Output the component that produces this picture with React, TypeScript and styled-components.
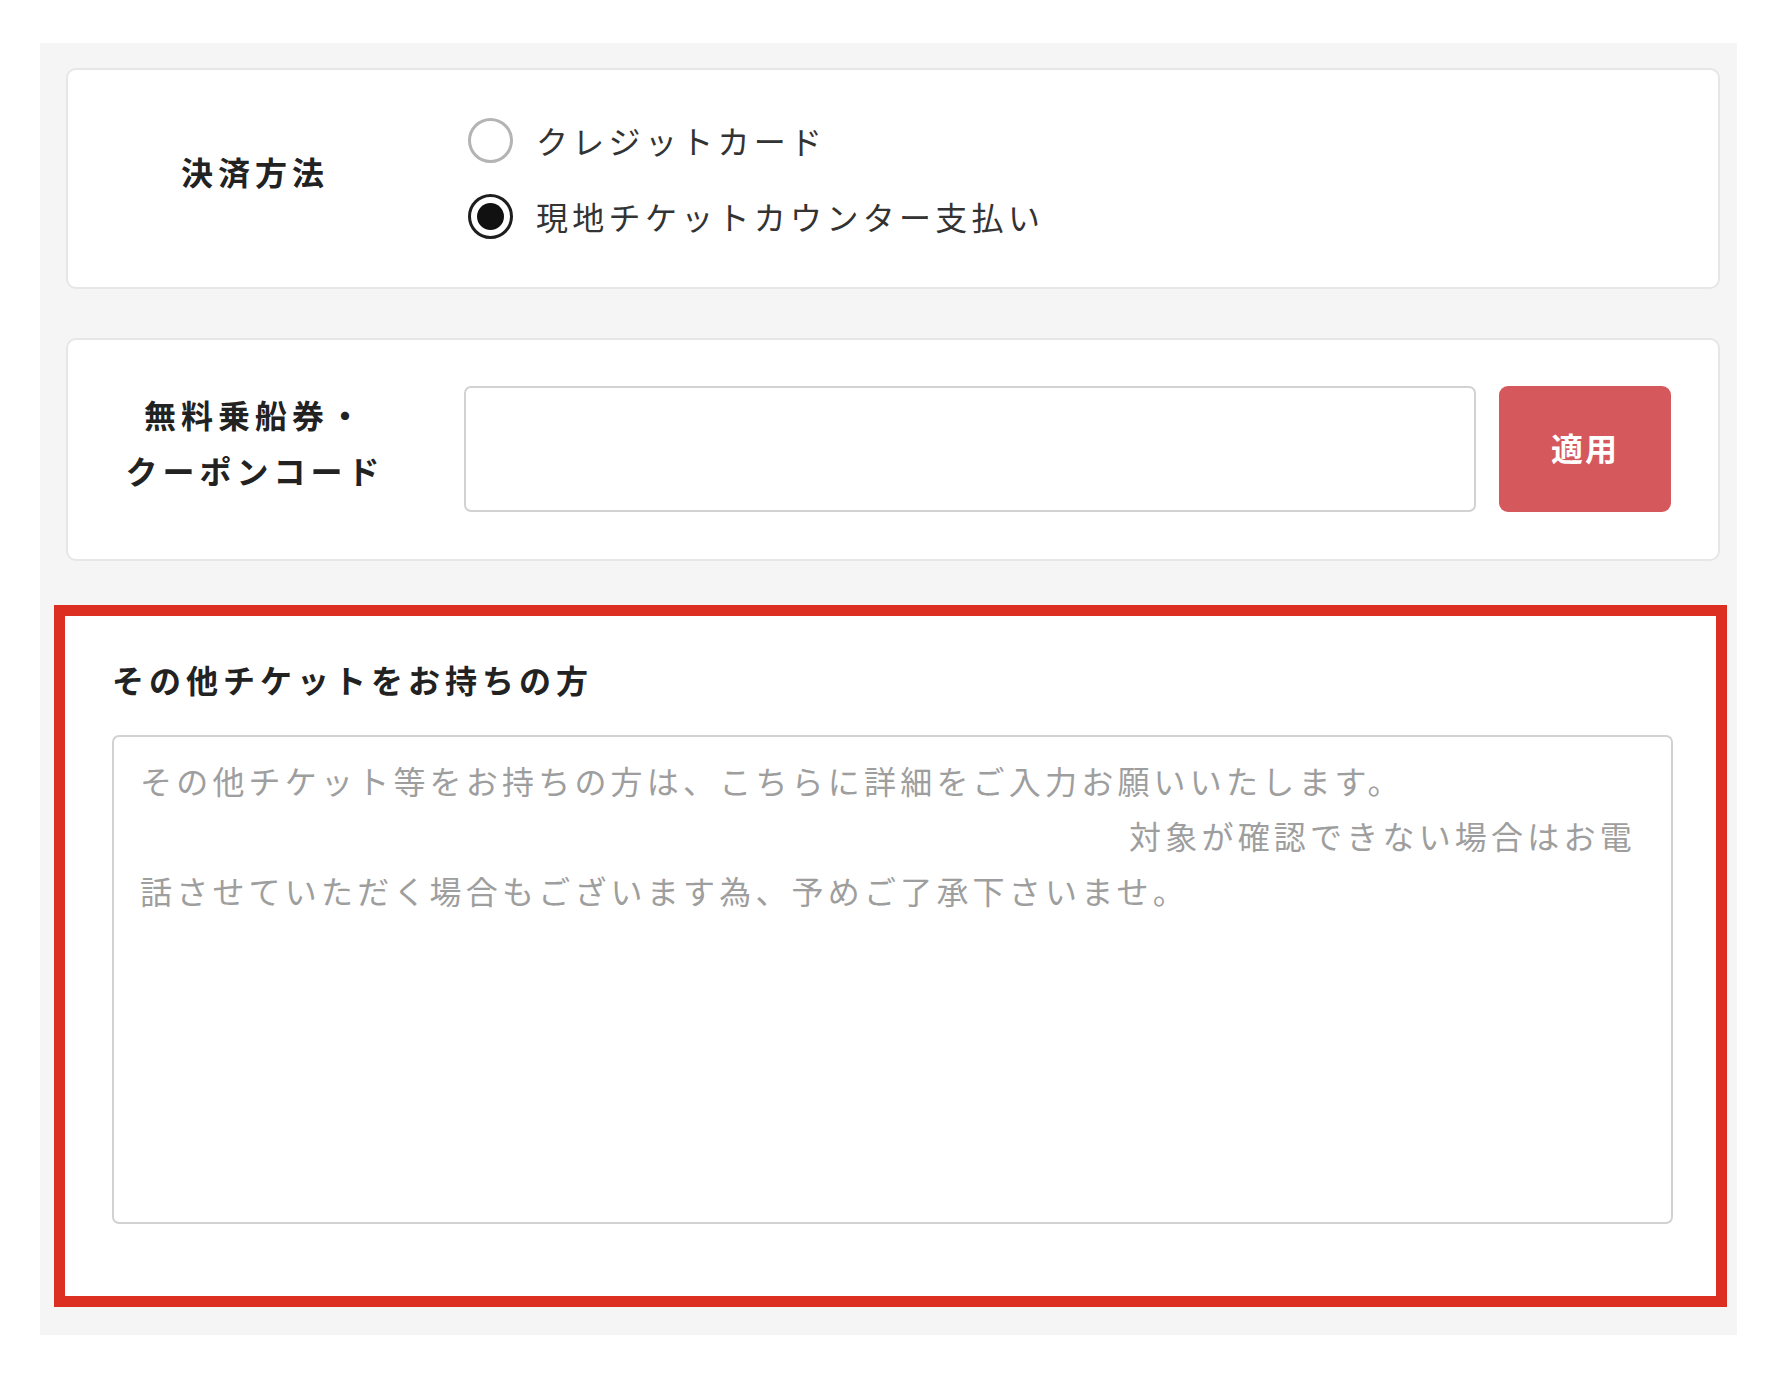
import React from 'react'
import styled, { createGlobalStyle } from 'styled-components'

const GlobalStyle = createGlobalStyle`
    html, body {
        margin: 0;
        padding: 0;
        background: #ffffff;
    }
    body {
        font-family: "Noto Sans CJK JP", "Noto Sans", sans-serif;
        color: #222222;
    }
`

const Page = styled.div`
    padding: 43px 41px 48px 40px;
`

const Panel = styled.div`
    display: flex;
    flex-direction: column;
    background: #f5f5f5;
    padding: 25px 17px 28px 26px;
`

const Card = styled.section`
    display: flex;
    align-items: center;
    background: #ffffff;
    border: 2px solid #e6e6e6;
    border-radius: 10px;
    box-sizing: border-box;
    padding: 46px 47px 47px 46px;
    margin-bottom: 49px;
`

const Highlight = styled.section`
    display: flex;
    flex-direction: column;
    background: #ffffff;
    border: 11px solid #dc2f21;
    margin: -5px -7px 0 -12px;
    padding: 39px 43px 72px 47px;
`

const Label = styled.div`
    width: 282px;
    flex-shrink: 0;
    margin-right: 68px;
    padding-bottom: 14px;
    text-align: center;
    font-size: 32px;
    font-weight: 700;
    letter-spacing: 5px;
    line-height: 56px;
    color: #222222;
`

const RadioGroup = styled.div`
    display: flex;
    flex-direction: column;
    gap: 28px;
    margin-left: 4px;
`

const RadioRow = styled.label`
    display: flex;
    align-items: center;
    height: 48px;
    gap: 23px;
    font-size: 32px;
    letter-spacing: 4.3px;
    color: #333333;
    cursor: pointer;
`

const Radio = styled.input`
    appearance: none;
    margin: 0;
    width: 45px;
    height: 45px;
    border-radius: 50%;
    border: 3px solid #b4b4b4;
    box-sizing: border-box;
    background: #ffffff;
    display: grid;
    place-items: center;

    &:checked {
        border: 3.5px solid #1e1e1e;
    }
    &:checked::after {
        content: '';
        width: 27px;
        height: 27px;
        border-radius: 50%;
        background: #111111;
    }
`

const TextInput = styled.input`
    flex: 1;
    height: 126px;
    box-sizing: border-box;
    border: 2px solid #d2d2d2;
    border-radius: 7px;
    padding: 0 24px;
    font-size: 32px;
    font-family: inherit;
    outline: none;
`

const ApplyButton = styled.button`
    width: 172px;
    height: 126px;
    margin-left: 23px;
    padding-bottom: 6px;
    flex-shrink: 0;
    border: none;
    border-radius: 9px;
    background: #d4585c;
    color: #ffffff;
    font-family: inherit;
    font-size: 32px;
    font-weight: 700;
    letter-spacing: 2px;
    cursor: pointer;
`

const Title = styled.h3`
    margin: 0 0 32px;
    font-size: 32px;
    font-weight: 700;
    line-height: 48px;
    letter-spacing: 5px;
    color: #222222;
`

const TextArea = styled.textarea`
    height: 489px;
    box-sizing: border-box;
    border: 2px solid #d2d2d2;
    border-radius: 7px;
    padding: 16px 22px 16px 26px;
    font-family: inherit;
    font-size: 32px;
    letter-spacing: 4.2px;
    line-height: 55px;
    resize: none;
    outline: none;
    white-space: pre-wrap;

    &::placeholder {
        color: #9e9e9e;
    }
`

const notePlaceholder =
    'その他チケット等をお持ちの方は、こちらに詳細をご入力お願いいたします。\n' +
    ' '.repeat(87) +
    '対象が確認できない場合はお電話させていただく場合もございます為、予めご了承下さいませ。'

const App = () => {
    const payments = [
        { id: 'credit', label: 'クレジットカード' },
        { id: 'counter', label: '現地チケットカウンター支払い' },
    ]

    return (
        <>
            <GlobalStyle />
            <Page>
                <Panel>
                    <Card>
                        <Label>決済方法</Label>
                        <RadioGroup>
                            {payments.map((p) => (
                                <RadioRow key={p.id}>
                                    <Radio
                                        type="radio"
                                        name="payment"
                                        defaultChecked={p.id === 'counter'}
                                    />
                                    {p.label}
                                </RadioRow>
                            ))}
                        </RadioGroup>
                    </Card>
                    <Card>
                        <Label>
                            無料乗船券・
                            <br />
                            クーポンコード
                        </Label>
                        <TextInput type="text" />
                        <ApplyButton type="button">適用</ApplyButton>
                    </Card>
                    <Highlight>
                        <Title>その他チケットをお持ちの方</Title>
                        <TextArea placeholder={notePlaceholder} />
                    </Highlight>
                </Panel>
            </Page>
        </>
    )
}

export default App
